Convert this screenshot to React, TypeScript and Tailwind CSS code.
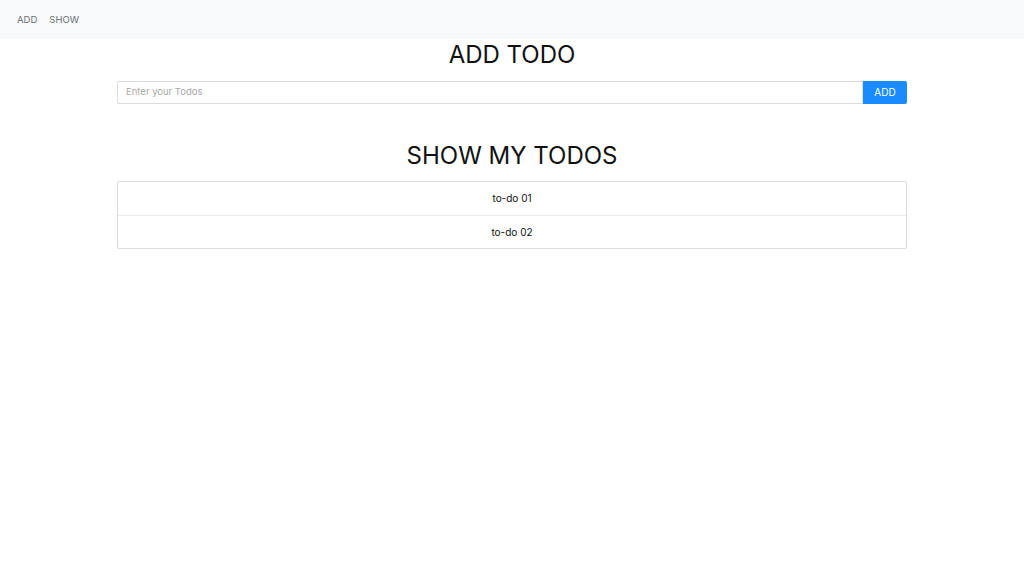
export default function App() {
  const todos = ['to-do 01', 'to-do 02'];
  return (
    <div className="min-h-screen bg-white font-['Inter',sans-serif] text-[#111]">
      <nav className="flex h-[39px] items-center gap-[12px] bg-[#f8f9fa] px-[17px] pt-[2px] text-[9.5px] text-[#6b6f73]">
        <a>ADD</a>
        <a>SHOW</a>
      </nav>

      <div className="mx-auto w-[790px]">
        <h1 className="pt-[1px] text-center text-[24px] leading-[30px]">ADD TODO</h1>
        <div className="mt-[11px] flex h-[23px]">
          <input
            className="flex-1 rounded-l-[2px] border border-[#dcdcdc] px-[8px] text-[9.5px] outline-none placeholder:text-[#a8a8a8]"
            placeholder="Enter your Todos"
          />
          <button className="w-[44px] rounded-r-[2px] bg-[#1a8cff] text-[10px] text-white">ADD</button>
        </div>

        <h1 className="mt-[37px] text-center text-[24px] leading-[30px]">SHOW MY TODOS</h1>
        <ul className="mt-[10px] rounded-[2px] border border-[#dcdcdc]">
          {todos.map((t, i) => (
            <li
              key={t}
              className={`flex h-[33px] items-center justify-center text-[10px] ${i > 0 ? 'border-t border-[#ececec]' : ''}`}
            >
              {t}
            </li>
          ))}
        </ul>
      </div>
    </div>
  );
}
